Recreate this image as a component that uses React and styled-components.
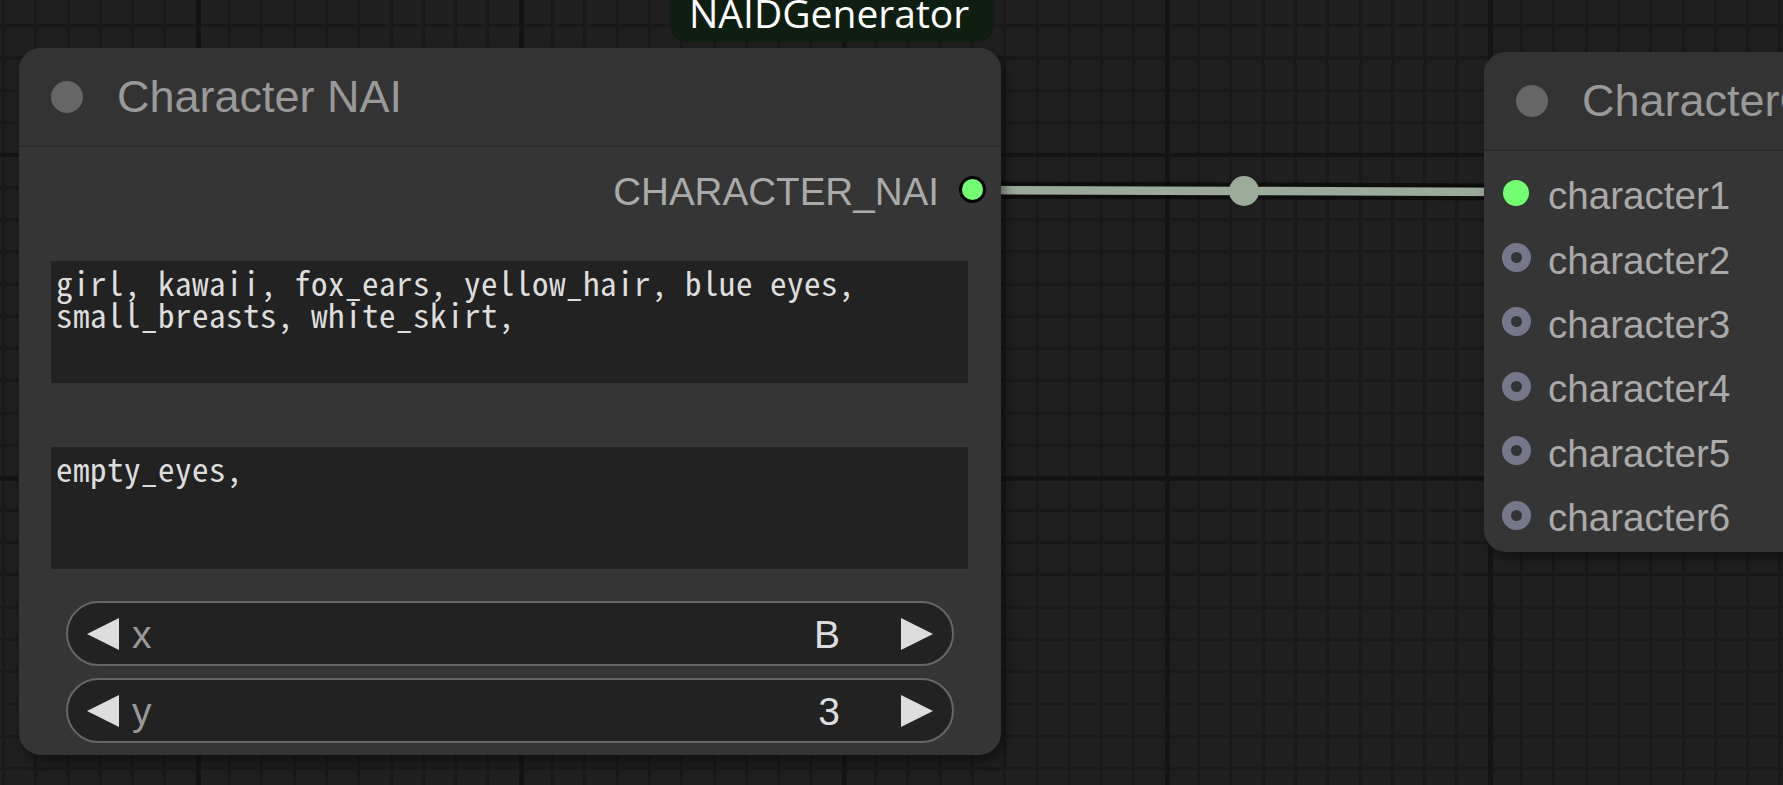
import React from 'react';
import styled, { createGlobalStyle } from 'styled-components';

const GlobalStyle = createGlobalStyle`
  html, body { margin: 0; padding: 0; width: 100%; height: 100%; overflow: hidden; background: #1f1f1f; }
  #root { width: 100%; height: 100%; }
`;

const Canvas = styled.div`
  position: relative;
  width: 1783px;
  height: 785px;
  overflow: hidden;
  font-family: "Liberation Sans", Arial, sans-serif;
  background-color: #1f1f1f;
  background-image:
    repeating-linear-gradient(90deg, transparent 0 196px, #141414 196px 201px, transparent 201px 323px),
    repeating-linear-gradient(180deg, transparent 0 152.5px, #141414 152.5px 157.5px, transparent 157.5px 323px),
    repeating-linear-gradient(90deg, transparent 0 2px, #191919 2px 5px, transparent 5px 32.3px),
    repeating-linear-gradient(180deg, transparent 0 24.2px, #191919 24.2px 27.2px, transparent 27.2px 32.3px);
`;

const Links = styled.svg`
  position: absolute;
  left: 0;
  top: 0;
  width: 1783px;
  height: 785px;
  pointer-events: none;
`;

const GroupTitle = styled.div`
  position: absolute;
  left: 670px;
  top: -30px;
  width: 324px;
  height: 72px;
  box-sizing: border-box;
  background: #0e1e10;
  border-radius: 0 0 17px 17px;
  display: flex;
  align-items: flex-end;
  padding: 0 0 10px 19px;
  color: #ffffff;
  font-family: "Open Sans", "Noto Sans", sans-serif;
  font-size: 39px;
  line-height: 39px;
`;

const Node = styled.div`
  position: absolute;
  left: ${p => p.$x}px;
  top: ${p => p.$y}px;
  width: ${p => p.$w}px;
  background: #353535;
  border-radius: 22px;
  box-shadow: 4px 6px 12px rgba(0, 0, 0, 0.45);
  display: flex;
  flex-direction: column;
  overflow: hidden;
`;

const TitleBar = styled.div`
  height: 97px;
  flex: none;
  background: #333333;
  border-bottom: 2px solid #2b2b2b;
  display: flex;
  align-items: center;
  gap: 34px;
  padding-left: 32px;
`;

const TitleDot = styled.span`
  width: 32px;
  height: 32px;
  flex: none;
  border-radius: 50%;
  background: #666666;
`;

const TitleText = styled.span`
  font-size: 45px;
  color: #999999;
  white-space: nowrap;
`;

const Body = styled.div`
  display: flex;
  flex-direction: column;
  padding: 10px 0 ${p => p.$bottom}px;
`;

const OutputRow = styled.div`
  height: 64px;
  display: flex;
  align-items: center;
  justify-content: flex-end;
  gap: 20px;
  padding-right: 15px;
`;

const InputRow = styled.div`
  height: 64.4px;
  display: flex;
  align-items: center;
  gap: 18px;
  padding-left: 18px;
`;

const SlotLabel = styled.span`
  font-size: 38.6px;
  color: #aaaaaa;
  padding-top: 6px;
  white-space: nowrap;
`;

const DotBox = styled.span`
  width: 28px;
  height: 28px;
  flex: none;
  display: flex;
  align-items: center;
  justify-content: center;
`;

const Dot = styled.span`
  box-sizing: border-box;
  border-radius: 50%;
  flex: none;
  width: ${p => (p.$kind === 'ring' ? 29 : p.$kind === 'out' ? 27 : 26)}px;
  height: ${p => (p.$kind === 'ring' ? 29 : p.$kind === 'out' ? 27 : 26)}px;
  background: ${p => (p.$kind === 'ring' ? '#333333' : '#72ff72')};
  border: ${p =>
    p.$kind === 'ring' ? '9.5px solid #77778a' : p.$kind === 'out' ? '3px solid #000' : 'none'};
`;

const TextBox = styled.textarea`
  display: block;
  box-sizing: border-box;
  height: 122px;
  margin: ${p => p.$top}px 33px 0 32px;
  padding: 5px 5px;
  border: none;
  outline: none;
  resize: none;
  overflow: hidden;
  background: #222222;
  color: #dddddd;
  font-family: "Noto Sans Mono CJK JP", "Liberation Mono", monospace;
  font-size: 33px;
  line-height: 32px;
  letter-spacing: 0.5px;
`;

const Combo = styled.div`
  box-sizing: border-box;
  height: 65px;
  margin: ${p => p.$top}px 47px 0;
  border: 2px solid #666666;
  border-radius: 33px;
  background: #222222;
  display: flex;
  align-items: center;
  padding: 0 19px;
  font-size: 39px;
`;

const ComboLabel = styled.span`
  flex: 1;
  margin-left: 13px;
  color: #999999;
  padding-top: 2px;
`;

const ComboValue = styled.span`
  color: #dddddd;
  margin-right: 61px;
  padding-top: 2px;
`;

const Arrow = ({ dir }) => (
  <svg width="32" height="32" viewBox="0 0 32 32" style={{ flex: 'none', display: 'block' }}>
    {dir === 'left' ? (
      <polygon points="0,16 32,0 32,32" fill="#dddddd" />
    ) : (
      <polygon points="32,16 0,0 0,32" fill="#dddddd" />
    )}
  </svg>
);

const ComboWidget = ({ label, value, top }) => (
  <Combo $top={top}>
    <Arrow dir="left" />
    <ComboLabel>{label}</ComboLabel>
    <ComboValue>{value}</ComboValue>
    <Arrow dir="right" />
  </Combo>
);

const inputs = ['character1', 'character2', 'character3', 'character4', 'character5', 'character6'];

export default function App() {
  return (
    <>
      <GlobalStyle />
      <Canvas>
        <Links viewBox="0 0 1783 785">
          <path d="M 972 190 C 1244 190, 1244 192, 1516 192" stroke="rgba(0,0,0,0.55)" strokeWidth="17" fill="none" />
          <path d="M 972 190 C 1244 190, 1244 192, 1516 192" stroke="#9bab99" strokeWidth="8.5" fill="none" />
          <circle cx="1244" cy="191" r="15" fill="#9bab99" />
        </Links>

        <GroupTitle>NAIDGenerator</GroupTitle>

        <Node $x={19} $y={48} $w={982}>
          <TitleBar>
            <TitleDot />
            <TitleText>Character NAI</TitleText>
          </TitleBar>
          <Body $bottom={12}>
            <OutputRow>
              <SlotLabel>CHARACTER_NAI</SlotLabel>
              <Dot $kind="out" />
            </OutputRow>
            <TextBox
              $top={40}
              readOnly
              spellCheck={false}
              value={'girl, kawaii, fox_ears, yellow_hair, blue eyes, small_breasts, white_skirt,'}
            />
            <TextBox $top={64} readOnly spellCheck={false} value={'empty_eyes,'} />
            <ComboWidget label="x" value="B" top={32} />
            <ComboWidget label="y" value="3" top={12} />
          </Body>
        </Node>

        <Node $x={1484} $y={52} $w={560}>
          <TitleBar>
            <TitleDot />
            <TitleText>CharacterConcat NAI</TitleText>
          </TitleBar>
          <Body $bottom={5}>
            {inputs.map((name, i) => (
              <InputRow key={name}>
                <DotBox>
                  <Dot $kind={i === 0 ? 'in' : 'ring'} />
                </DotBox>
                <SlotLabel>{name}</SlotLabel>
              </InputRow>
            ))}
          </Body>
        </Node>
      </Canvas>
    </>
  );
}
